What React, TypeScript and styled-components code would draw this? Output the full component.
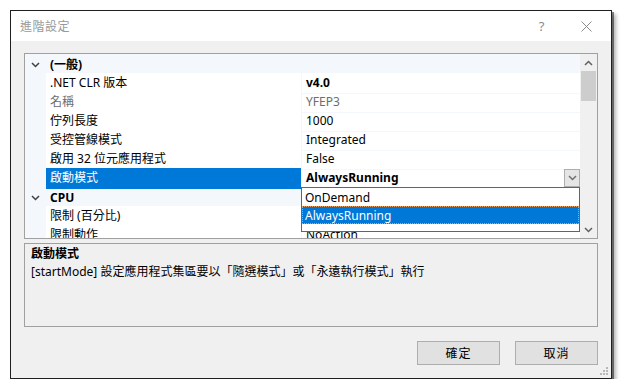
import React from 'react'
import styled, { createGlobalStyle } from 'styled-components'

const GlobalStyle = createGlobalStyle`
  body {
    margin: 0;
    background: #fff;
    font-family: "Noto Sans", "Noto Sans CJK TC", sans-serif;
    font-size: 12px;
    color: #000;
  }
`

const Page = styled.div`
  padding: 10px 0 0 10px;
`

const Window = styled.div`
  box-sizing: border-box;
  width: 602px;
  height: 369px;
  border: 1px solid #1f1f1f;
  background: #f0f0f0;
  display: flex;
  flex-direction: column;
  box-shadow: 2px 2px 0 rgba(0, 0, 0, 0.45), 4px 4px 4px rgba(0, 0, 0, 0.3);
`

const TitleBar = styled.div`
  height: 30px;
  background: #fff;
  display: flex;
  align-items: center;
`

const Title = styled.div`
  padding-left: 9px;
  color: #999;
  font-size: 12px;
  letter-spacing: 0.5px;
`

const CaptionButtons = styled.div`
  margin-left: auto;
  display: flex;
  margin-right: 2px;
`

const CaptionButton = styled.div`
  width: 45px;
  height: 30px;
  display: flex;
  align-items: center;
  justify-content: center;
  color: #8a8a8a;
  font-size: 13px;
`

const Client = styled.div`
  flex: 1;
  padding: 12px 13px 0 13px;
  display: flex;
  flex-direction: column;
`

const Grid = styled.div`
  position: relative;
  height: 186px;
  box-sizing: border-box;
  border: 1px solid #a0a0a0;
  background: #fff;
  display: flex;
`

const GridBody = styled.div`
  flex: 1;
  overflow: hidden;
`

const Row = styled.div`
  display: grid;
  grid-template-columns: 21px 255px 1px 1fr;
  height: 19px;
`

const CategoryRow = styled.div`
  display: grid;
  grid-template-columns: 21px 1fr;
  height: 19px;
  background: #f4f7fc;
`

const Margin = styled.div`
  background: #f4f7fc;
  display: flex;
  align-items: center;
  justify-content: center;
`

const CategoryLabel = styled.div`
  padding-left: 4px;
  line-height: 21px;
  font-weight: bold;
`

const NameCell = styled.div<{ $selected?: boolean; $readOnly?: boolean }>`
  box-sizing: border-box;
  padding-left: 4px;
  line-height: 20px;
  white-space: nowrap;
  border-bottom: 1px solid ${p => (p.$selected ? '#0078d7' : '#f4f7fc')};
  background: ${p => (p.$selected ? '#0078d7' : '#fff')};
  color: ${p => (p.$selected ? '#fff' : p.$readOnly ? '#6d6d6d' : '#000')};
`

const Separator = styled.div`
  background: #f4f7fc;
`

const ValueCell = styled.div<{ $bold?: boolean; $readOnly?: boolean }>`
  box-sizing: border-box;
  padding-left: 4px;
  line-height: 20px;
  white-space: nowrap;
  border-bottom: 1px solid #f4f7fc;
  font-weight: ${p => (p.$bold ? 'bold' : 'normal')};
  color: ${p => (p.$readOnly ? '#6d6d6d' : '#000')};
`

const Editor = styled.div`
  box-sizing: border-box;
  display: flex;
  align-items: center;
  border-bottom: 1px solid #f4f7fc;
  padding-left: 4px;
`

const EditorText = styled.div`
  flex: 1;
  font-weight: bold;
  font-size: 12px;
  line-height: 20px;
`

const DropButton = styled.div`
  box-sizing: border-box;
  width: 16px;
  height: 18px;
  border: 1px solid #adadad;
  background: #e5e5e5;
  display: flex;
  align-items: center;
  justify-content: center;
`

const Scrollbar = styled.div`
  width: 17px;
  background: #f0f0f0;
  display: flex;
  flex-direction: column;
  align-items: center;
`

const ScrollArrow = styled.div`
  height: 17px;
  width: 17px;
  display: flex;
  align-items: center;
  justify-content: center;
`

const Thumb = styled.div`
  width: 15px;
  height: 30px;
  background: #cdcdcd;
`

const ScrollTrack = styled.div`
  flex: 1;
`

const DropList = styled.div`
  position: absolute;
  left: 276px;
  top: 133px;
  width: 279px;
  height: 45px;
  box-sizing: border-box;
  border: 1px solid #646464;
  background: #fff;
`

const ListItem = styled.div<{ $selected?: boolean }>`
  box-sizing: border-box;
  height: 18px;
  line-height: 17px;
  padding-left: 2px;
  border: 1px ${p => (p.$selected ? 'dotted #e8a060' : 'solid transparent')};
  background: ${p => (p.$selected ? '#0078d7' : '#fff')};
  color: ${p => (p.$selected ? '#fff' : '#000')};
`

const Description = styled.div`
  margin-top: 4px;
  height: 84px;
  box-sizing: border-box;
  border: 1px solid #a0a0a0;
  padding: 1px 6px 0;
  line-height: 18px;
`

const DescTitle = styled.div`
  font-weight: 600;
`

const ButtonRow = styled.div`
  margin-top: 14px;
  display: flex;
  justify-content: flex-end;
  gap: 15px;
  position: relative;
`

const Button = styled.div`
  box-sizing: border-box;
  width: 83px;
  height: 24px;
  border: 1px solid #adadad;
  background: #e1e1e1;
  display: flex;
  align-items: center;
  justify-content: center;
  letter-spacing: 1px;
`

const Grip = styled.svg`
  position: absolute;
  right: -11px;
  bottom: -11px;
`

const Chevron = ({ up, color = '#404040' }: { up?: boolean; color?: string }) => (
  <svg width="9" height="6" viewBox="0 0 9 6">
    <path
      d={up ? 'M1 5 L4.5 1.5 L8 5' : 'M1 1 L4.5 4.5 L8 1'}
      fill="none"
      stroke={color}
      strokeWidth="1.5"
    />
  </svg>
)

interface Prop {
  name: string
  value: string
  bold?: boolean
  readOnly?: boolean
  selected?: boolean
}

const general: Prop[] = [
  { name: '.NET CLR 版本', value: 'v4.0', bold: true },
  { name: '名稱', value: 'YFEP3', readOnly: true },
  { name: '佇列長度', value: '1000' },
  { name: '受控管線模式', value: 'Integrated' },
  { name: '啟用 32 位元應用程式', value: 'False' },
  { name: '啟動模式', value: 'AlwaysRunning', bold: true, selected: true }
]

const cpu: Prop[] = [
  { name: '限制 (百分比)', value: '' },
  { name: '限制動作', value: 'NoAction' }
]

const renderRow = (p: Prop, i: number) => (
  <Row key={i}>
    <Margin />
    <NameCell $selected={p.selected} $readOnly={p.readOnly}>
      {p.name}
    </NameCell>
    <Separator />
    {p.selected ? (
      <Editor>
        <EditorText>{p.value}</EditorText>
        <DropButton>
          <Chevron color="#707070" />
        </DropButton>
      </Editor>
    ) : (
      <ValueCell $bold={p.bold} $readOnly={p.readOnly}>
        {p.value}
      </ValueCell>
    )}
  </Row>
)

export default function App() {
  return (
    <Page>
      <GlobalStyle />
      <Window>
        <TitleBar>
          <Title>進階設定</Title>
          <CaptionButtons>
            <CaptionButton>?</CaptionButton>
            <CaptionButton>
              <svg width="11" height="11" viewBox="0 0 11 11">
                <path d="M0.5 0.5 L10.5 10.5 M10.5 0.5 L0.5 10.5" stroke="#8a8a8a" strokeWidth="1" />
              </svg>
            </CaptionButton>
          </CaptionButtons>
        </TitleBar>
        <Client>
          <Grid>
            <GridBody>
              <CategoryRow>
                <Margin>
                  <Chevron />
                </Margin>
                <CategoryLabel>(一般)</CategoryLabel>
              </CategoryRow>
              {general.map(renderRow)}
              <CategoryRow>
                <Margin>
                  <Chevron />
                </Margin>
                <CategoryLabel>CPU</CategoryLabel>
              </CategoryRow>
              {cpu.map(renderRow)}
            </GridBody>
            <Scrollbar>
              <ScrollArrow>
                <Chevron up color="#606060" />
              </ScrollArrow>
              <Thumb />
              <ScrollTrack />
              <ScrollArrow>
                <Chevron color="#606060" />
              </ScrollArrow>
            </Scrollbar>
            <DropList>
              <ListItem>OnDemand</ListItem>
              <ListItem $selected>AlwaysRunning</ListItem>
            </DropList>
          </Grid>
          <Description>
            <DescTitle>啟動模式</DescTitle>
            <div>[startMode] 設定應用程式集區要以「隨選模式」或「永遠執行模式」執行</div>
          </Description>
          <ButtonRow>
            <Button>確定</Button>
            <Button>取消</Button>
            <Grip width="9" height="9" viewBox="0 0 9 9">
              <rect x="6" y="0" width="2" height="2" fill="#b8b8b8" />
              <rect x="3" y="3" width="2" height="2" fill="#b8b8b8" />
              <rect x="6" y="3" width="2" height="2" fill="#b8b8b8" />
              <rect x="0" y="6" width="2" height="2" fill="#b8b8b8" />
              <rect x="3" y="6" width="2" height="2" fill="#b8b8b8" />
              <rect x="6" y="6" width="2" height="2" fill="#b8b8b8" />
            </Grip>
          </ButtonRow>
        </Client>
      </Window>
    </Page>
  )
}
